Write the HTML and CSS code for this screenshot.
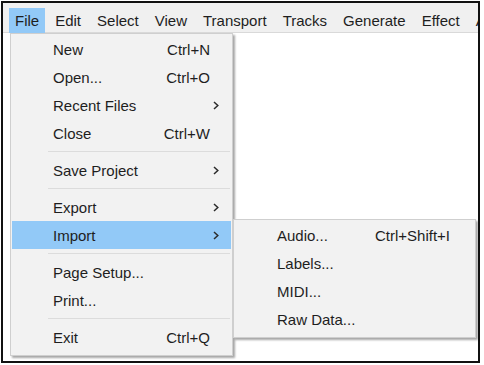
FILE: index.html
```html
<!DOCTYPE html>
<html lang="en">
<head>
    <meta charset="UTF-8">
    <meta name="viewport" content="width=device-width, initial-scale=1.0">
    <title>File menu</title>
    <link rel="stylesheet" href="styles.css">
</head>
<body>

<div class="window">
    <div class="menubar">
        <div class="top-item open">File</div>
        <div class="top-item">Edit</div>
        <div class="top-item">Select</div>
        <div class="top-item">View</div>
        <div class="top-item">Transport</div>
        <div class="top-item">Tracks</div>
        <div class="top-item">Generate</div>
        <div class="top-item">Effect</div>
        <div class="top-item">Analyze</div>
    </div>
    <div class="content"></div>

    <div class="menu file-menu">
        <div class="item"><span class="label">New</span><span class="key">Ctrl+N</span><span class="arrow"></span></div>
        <div class="item"><span class="label">Open...</span><span class="key">Ctrl+O</span><span class="arrow"></span></div>
        <div class="item"><span class="label">Recent Files</span><span class="key"></span><span class="arrow"><svg width="6" height="9" viewBox="0 0 6 9"><path d="M1 1 L4.8 4.5 L1 8" fill="none" stroke="#2b2b2b" stroke-width="1.5"/></svg></span></div>
        <div class="item"><span class="label">Close</span><span class="key">Ctrl+W</span><span class="arrow"></span></div>
        <div class="sep"></div>
        <div class="item"><span class="label">Save Project</span><span class="key"></span><span class="arrow"><svg width="6" height="9" viewBox="0 0 6 9"><path d="M1 1 L4.8 4.5 L1 8" fill="none" stroke="#2b2b2b" stroke-width="1.5"/></svg></span></div>
        <div class="sep"></div>
        <div class="item"><span class="label">Export</span><span class="key"></span><span class="arrow"><svg width="6" height="9" viewBox="0 0 6 9"><path d="M1 1 L4.8 4.5 L1 8" fill="none" stroke="#2b2b2b" stroke-width="1.5"/></svg></span></div>
        <div class="item active"><span class="label">Import</span><span class="key"></span><span class="arrow"><svg width="6" height="9" viewBox="0 0 6 9"><path d="M1 1 L4.8 4.5 L1 8" fill="none" stroke="#2b2b2b" stroke-width="1.5"/></svg></span></div>
        <div class="sep"></div>
        <div class="item"><span class="label">Page Setup...</span><span class="key"></span><span class="arrow"></span></div>
        <div class="item"><span class="label">Print...</span><span class="key"></span><span class="arrow"></span></div>
        <div class="sep"></div>
        <div class="item"><span class="label">Exit</span><span class="key">Ctrl+Q</span><span class="arrow"></span></div>
    </div>

    <div class="menu import-menu">
        <div class="item"><span class="label">Audio...</span><span class="key">Ctrl+Shift+I</span><span class="arrow"></span></div>
        <div class="item"><span class="label">Labels...</span><span class="key"></span><span class="arrow"></span></div>
        <div class="item"><span class="label">MIDI...</span><span class="key"></span><span class="arrow"></span></div>
        <div class="item"><span class="label">Raw Data...</span><span class="key"></span><span class="arrow"></span></div>
    </div>
</div>

</body>
</html>
```

FILE: styles.css
```css
body {
    margin: 0;
    background: #fff;
    font-family: 'Liberation Sans', Arial, sans-serif;
    font-size: 15px;
    color: #1e1e1e;
}
.window {
    position: relative;
    margin: 1px;
    width: 479px;
    height: 362px;
    box-sizing: border-box;
    border: 2px solid #111;
    overflow: hidden;
}
.menubar {
    display: flex;
    height: 30px;
    box-sizing: border-box;
    padding: 5px 0 0 6px;
    background: #f0f0f0;
    border-bottom: 1px solid #d9d9d9;
    white-space: nowrap;
}
.top-item {
    height: 25px;
    line-height: 26px;
    padding: 0 6px;
    margin-right: 4px;
}
.top-item.open {
    background: #92c9f7;
}
.content {
    background: #fff;
}
.menu {
    position: absolute;
    background: #f2f2f2;
    border: 1px solid #cfcfcf;
    padding: 1px 1px 4px 1px;
    box-shadow: 2px 2px 2px rgba(0, 0, 0, 0.35);
}
.file-menu {
    left: 7px;
    top: 30px;
    width: 219px;
}
.import-menu {
    left: 230px;
    top: 216px;
    width: 239px;
}
.item {
    display: flex;
    align-items: center;
    height: 28px;
    padding: 0 9px 0 41px;
}
.import-menu .item {
    padding: 0 12px 0 42px;
}
.item.active {
    background: #92c9f7;
}
.label {
    flex: 1;
}
.key {
    text-align: right;
}
.arrow {
    width: 12px;
    display: flex;
    justify-content: center;
}
.sep {
    height: 9px;
    display: flex;
    align-items: center;
    padding-left: 36px;
    padding-right: 1px;
}
.sep::after {
    content: '';
    flex: 1;
    height: 1px;
    background: #dcdcdc;
}
```
